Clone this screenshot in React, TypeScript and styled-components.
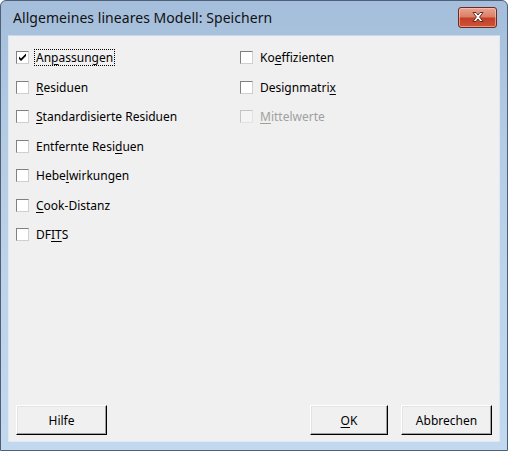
import React from "react";
import styled, { createGlobalStyle } from "styled-components";

const Global = createGlobalStyle`
  html, body { margin: 0; padding: 0; background: #ffffff; }
  * { box-sizing: border-box; }
`;

const Window = styled.div`
  width: 508px;
  height: 451px;
  display: flex;
  flex-direction: column;
  border: 1px solid #4d6078;
  border-radius: 6px 6px 0 0;
  background: linear-gradient(180deg, #a4bedb 0%, #b4cbe4 30%, #bdd3ea 60%, #c2d8ee 100%);
  padding: 0 7px 8px 7px;
  font-family: "Noto Sans", "Open Sans", sans-serif;
`;

const TitleBar = styled.div`
  height: 34px;
  display: flex;
  align-items: center;
  justify-content: space-between;
  padding: 0 3px 2px 5px;
`;

const Title = styled.div`
  font-family: "Noto Sans", sans-serif;
  font-size: 14px;
  color: #111;
  letter-spacing: 0.05px;
`;

const CloseButton = styled.div`
  width: 39px;
  height: 21px;
  border: 1px solid #6b2a22;
  border-radius: 3px;
  background: linear-gradient(180deg, #eaa48f 0%, #dc7f67 45%, #c43f27 55%, #cc5437 100%);
  box-shadow: inset 0 0 0 1px rgba(255, 210, 200, 0.55);
  display: flex;
  align-items: center;
  justify-content: center;
`;

const Client = styled.div`
  flex: 1;
  display: flex;
  flex-direction: column;
  background: #f0f0f0;
  border: 1px solid #dfe9f4;
  border-top-color: #c9d9ea;
  padding: 15px 7px 6px 7px;
  font-size: 12px;
  color: #000;
`;

const Columns = styled.div`
  flex: 1;
  display: grid;
  grid-template-columns: 224px 1fr;
`;

const Column = styled.div`
  display: flex;
  flex-direction: column;
`;

const Row = styled.label<{ $disabled?: boolean }>`
  height: 29.5px;
  display: flex;
  align-items: flex-start;
  gap: 5px;
  color: ${(p) => (p.$disabled ? "#a0a0a0" : "#000")};
`;

const Box = styled.span<{ $disabled?: boolean }>`
  width: 13px;
  height: 13px;
  flex: none;
  border-top: 1px solid ${(p) => (p.$disabled ? "#c4c4c4" : "#7f8080")};
  border-left: 1px solid ${(p) => (p.$disabled ? "#c4c4c4" : "#7f8080")};
  border-right: 1px solid ${(p) => (p.$disabled ? "#e2e2e2" : "#cfcfcf")};
  border-bottom: 1px solid ${(p) => (p.$disabled ? "#e2e2e2" : "#cfcfcf")};
  background: ${(p) => (p.$disabled ? "#f4f4f4" : "#ffffff")};
  display: flex;
  align-items: center;
  justify-content: center;
`;

const Label = styled.span<{ $focus?: boolean }>`
  line-height: 15px;
  margin-top: -2px;
  padding: 0 1px;
  border: 1px dotted ${(p) => (p.$focus ? "#000" : "transparent")};
  white-space: nowrap;
`;

const U = styled.span`
  text-decoration: underline;
  text-underline-offset: 2px;
`;

const ButtonRow = styled.div`
  display: flex;
  align-items: center;
  height: 30px;
`;

const Spacer = styled.div`
  flex: 1;
`;

const Button = styled.button<{ $w?: number; $gap?: number }>`
  width: ${(p) => p.$w ?? 91}px;
  height: 30px;
  margin-left: ${(p) => p.$gap ?? 0}px;
  font-family: "Noto Sans", sans-serif;
  font-size: 12px;
  color: #000;
  background: #f0f0f0;
  border-style: solid;
  border-width: 1px;
  border-color: #ffffff #000000 #000000 #ffffff;
  box-shadow: inset -1px -1px 0 #a0a0a0, inset 1px 1px 0 #e3e3e3;
  padding: 0;
  display: flex;
  align-items: center;
  justify-content: center;
`;

function Check() {
  return (
    <svg width="9" height="9" viewBox="0 0 9 9">
      <path d="M1 3.5 L3 5.5 L8 0.5 L8 3 L3 8 L1 6 Z" fill="#000" />
    </svg>
  );
}

function CloseX() {
  return (
    <svg width="14" height="12" viewBox="0 0 14 12">
      <path
        d="M2 1.5 L5 1.5 L7 4 L9 1.5 L12 1.5 L8.6 6 L12 10.5 L9 10.5 L7 8 L5 10.5 L2 10.5 L5.4 6 Z"
        fill="#ffffff"
        stroke="#5a1f18"
        strokeWidth="0.9"
        strokeLinejoin="round"
      />
    </svg>
  );
}

type Item = { pre: string; u: string; post: string; checked?: boolean; focus?: boolean; disabled?: boolean };

const left: Item[] = [
  { pre: "An", u: "p", post: "assungen", checked: true, focus: true },
  { pre: "", u: "R", post: "esiduen" },
  { pre: "", u: "S", post: "tandardisierte Residuen" },
  { pre: "Entfernte Resi", u: "d", post: "uen" },
  { pre: "Hebe", u: "l", post: "wirkungen" },
  { pre: "", u: "C", post: "ook-Distanz" },
  { pre: "DF", u: "IT", post: "S" },
];

const right: Item[] = [
  { pre: "Ko", u: "e", post: "ffizienten" },
  { pre: "Designmatri", u: "x", post: "" },
  { pre: "", u: "M", post: "ittelwerte", disabled: true },
];

function CheckRow({ item }: { item: Item }) {
  return (
    <Row $disabled={item.disabled}>
      <Box $disabled={item.disabled}>{item.checked && <Check />}</Box>
      <Label $focus={item.focus}>
        {item.pre}
        <U>{item.u}</U>
        {item.post}
      </Label>
    </Row>
  );
}

export default function App() {
  return (
    <>
      <Global />
      <Window>
        <TitleBar>
          <Title>Allgemeines lineares Modell: Speichern</Title>
          <CloseButton>
            <CloseX />
          </CloseButton>
        </TitleBar>
        <Client>
          <Columns>
            <Column>
              {left.map((it, i) => (
                <CheckRow key={i} item={it} />
              ))}
            </Column>
            <Column>
              {right.map((it, i) => (
                <CheckRow key={i} item={it} />
              ))}
            </Column>
          </Columns>
          <ButtonRow>
            <Button>Hilfe</Button>
            <Spacer />
            <Button $w={78}>
              <U>O</U>K
            </Button>
            <Button $gap={13}>Abbrechen</Button>
          </ButtonRow>
        </Client>
      </Window>
    </>
  );
}
